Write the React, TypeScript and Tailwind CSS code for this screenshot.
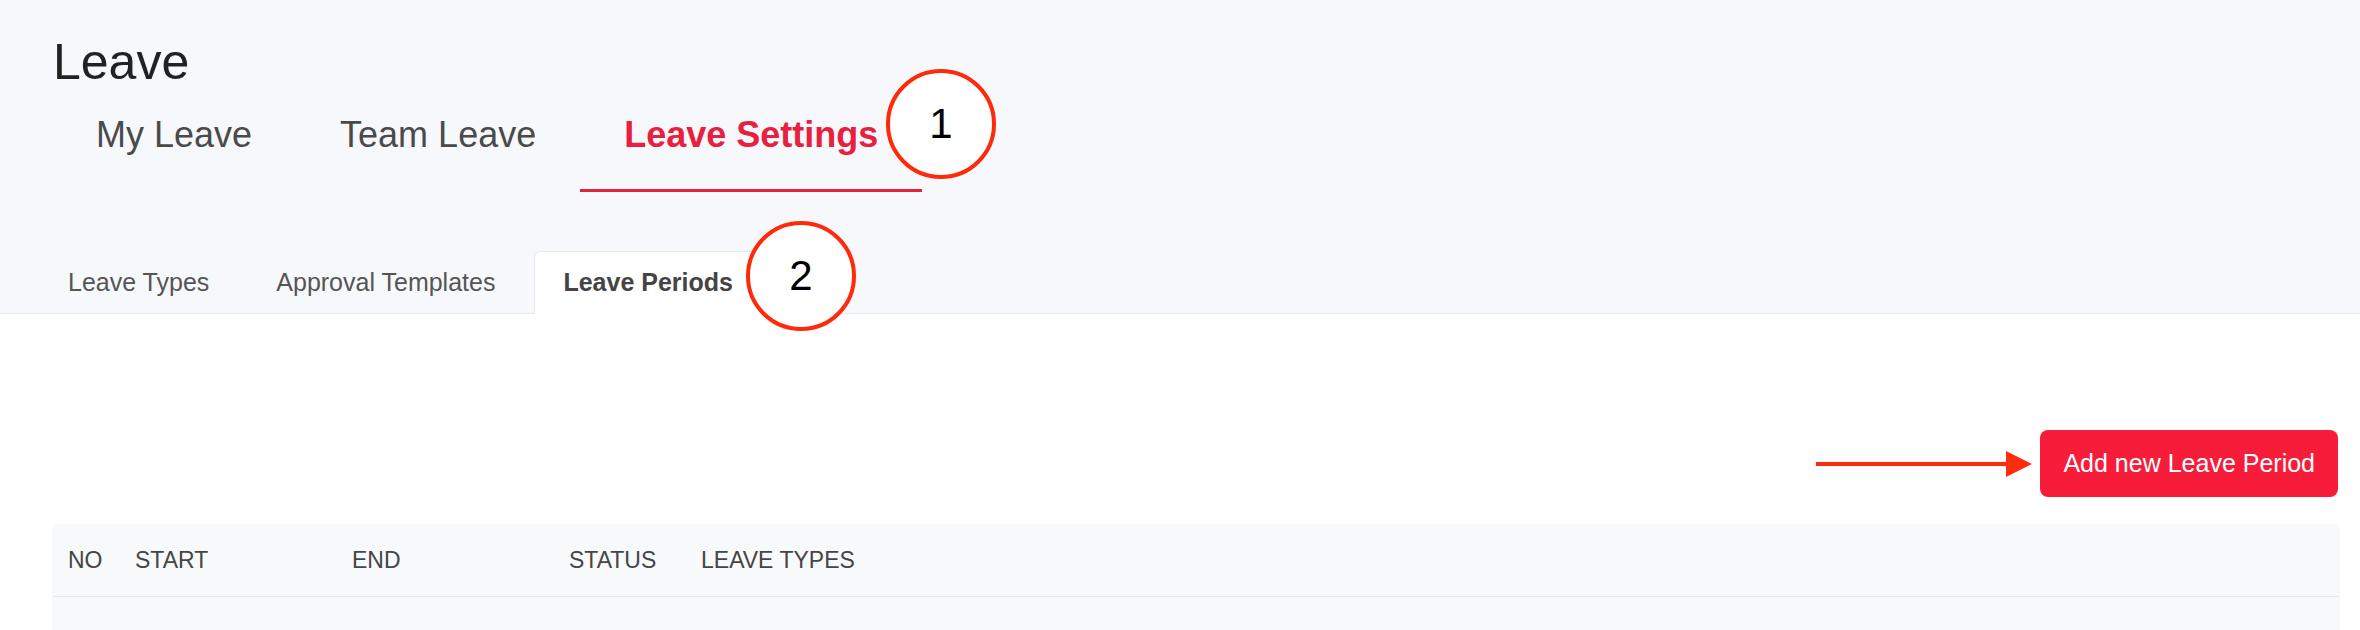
import React from "react";

const mainTabs = [
  { id: "my", label: "My Leave" },
  { id: "team", label: "Team Leave" },
  { id: "settings", label: "Leave Settings" },
];

const subTabs = [
  { id: "types", label: "Leave Types" },
  { id: "templates", label: "Approval Templates" },
  { id: "periods", label: "Leave Periods" },
];

function Marker({ n, className }: { n: string; className: string }) {
  return (
    <div
      className={`absolute z-10 w-[110px] h-[110px] rounded-full border-[4px] border-[#ff2a0a] bg-white flex items-center justify-center text-[42px] leading-none text-black ${className}`}
    >
      {n}
    </div>
  );
}

export default function App() {
  const activeMain = "settings";
  const activeSub = "periods";

  return (
    <div className="relative min-h-screen bg-white text-[#454545] font-['Liberation_Sans',Arial,sans-serif]">
      {/* header */}
      <div className="h-[314px] bg-[#f7f8fb] border-b border-[#e5e7eb] flex flex-col">
        <h1 className="pl-[53px] pt-[37px] text-[50px] leading-none font-normal text-[#222]">
          Leave
        </h1>

        <div className="flex pl-[52px] mt-[30px]">
          {mainTabs.map((t) => {
            const active = t.id === activeMain;
            return (
              <div
                key={t.id}
                className={`px-[44px] pb-[36px] border-b-[3px] text-[36px] leading-none ${
                  active
                    ? "border-[#e2233f] text-[#e8203f] font-bold"
                    : "border-transparent text-[#4a4a4a]"
                }`}
              >
                {t.label}
              </div>
            );
          })}
        </div>

        <div className="flex items-end gap-[11px] pl-[40px] mt-auto -mb-px">
          {subTabs.map((t) => {
            const active = t.id === activeSub;
            return (
              <div
                key={t.id}
                className={`h-[63px] px-[28px] flex items-center text-[25px] leading-none ${
                  active
                    ? "bg-white border border-[#e5e7eb] border-b-white rounded-t-[6px] font-bold text-[#444]"
                    : "text-[#555]"
                }`}
              >
                {t.label}
              </div>
            );
          })}
        </div>
      </div>

      <Marker n="1" className="left-[886px] top-[69px]" />
      <Marker n="2" className="left-[746px] top-[221px]" />

      {/* content */}
      <div className="pt-[116px] pl-[54px] pr-[22px]">
        <div className="flex justify-end items-center gap-[8px]">
          <svg width="216" height="26" viewBox="0 0 216 26">
            <line x1="0" y1="13" x2="192" y2="13" stroke="#ff2d0d" strokeWidth="4" />
            <polygon points="190,0 216,13 190,26" fill="#ff2d0d" />
          </svg>
          <button className="h-[67px] px-[23px] rounded-[8px] bg-[#f71d3a] text-white text-[25px] leading-none">
            Add new Leave Period
          </button>
        </div>

        <div className="mt-[28px] bg-[#f8f9fa] rounded-[4px] shadow-[0_1px_4px_rgba(0,0,0,0.08)]">
          <div className="grid grid-cols-[67px_217px_217px_132px_1fr] h-[72px] items-center border-b border-[#e3e5e8] text-[23px] leading-none uppercase text-[#454545]">
            <div className="pl-[14px]">No</div>
            <div className="pl-[14px]">Start</div>
            <div className="pl-[14px]">End</div>
            <div className="pl-[14px]">Status</div>
            <div className="pl-[14px]">Leave Types</div>
          </div>
          <div className="h-[80px]" />
        </div>
      </div>
    </div>
  );
}
